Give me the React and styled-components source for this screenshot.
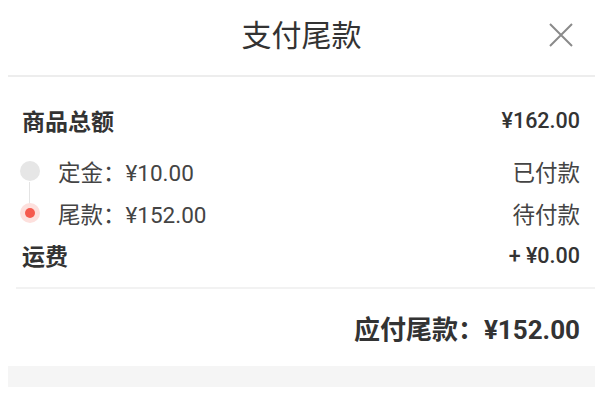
import styled, { createGlobalStyle } from "styled-components";

const GlobalStyle = createGlobalStyle`
  html, body {
    margin: 0;
    padding: 0;
    background: #fff;
  }
  body {
    font-family: Roboto, "Noto Sans CJK SC", sans-serif;
    color: #333;
  }
`;

const Sheet = styled.div`
  width: 587px;
  margin-left: 8px;
`;

const Header = styled.div`
  height: 75px;
  display: grid;
  grid-template-columns: 1fr auto 1fr;
  align-items: center;
  border-bottom: 2px solid #ededed;
`;

const Title = styled.h1`
  grid-column: 2;
  margin: 0;
  font-size: 30px;
  font-weight: 400;
  color: #333;
  line-height: 1;
  padding-bottom: 3px;
`;

const Close = styled.button`
  grid-column: 3;
  justify-self: end;
  margin-right: 22px;
  width: 24px;
  height: 24px;
  padding: 0;
  border: none;
  background: none;
  display: flex;
  align-items: center;
  justify-content: center;
  cursor: pointer;
  margin-bottom: 5px;
`;

const Body = styled.div`
  padding: 22px 15px 0 14px;
`;

const Row = styled.div`
  height: 42px;
  display: flex;
  align-items: center;
  justify-content: space-between;
  margin-top: ${(p) => p.$gap || 0}px;
`;

const Label = styled.span`
  font-size: 23px;
  font-weight: 700;
  color: #333;
`;

const Amount = styled.span`
  font-size: 21.5px;
  font-weight: 500;
  color: #333;
`;

const Status = styled.span`
  font-size: 22.5px;
  color: #444;
`;

const Step = styled.div`
  display: flex;
  align-items: center;
  gap: 18px;
  margin-left: -2px;
  font-size: 22.5px;
  color: #444;
`;

const Dot = styled.span`
  position: relative;
  width: 20px;
  height: 20px;
  border-radius: 50%;
  flex-shrink: 0;
  background: ${(p) => (p.$active ? "#fde0dd" : "#e6e6e6")};
  display: flex;
  align-items: center;
  justify-content: center;

  &::before {
    content: "";
    width: 10px;
    height: 10px;
    border-radius: 50%;
    background: ${(p) => (p.$active ? "#f55a4e" : "transparent")};
  }

  &::after {
    content: ${(p) => (p.$line ? '""' : "none")};
    position: absolute;
    left: 9px;
    top: 21px;
    width: 1px;
    height: 22px;
    background: #e4e4e4;
  }
`;

const Divider = styled.div`
  margin: 11px 0 0 8px;
  height: 2px;
  background: #f2f2f2;
`;

const TotalRow = styled.div`
  height: 77px;
  display: flex;
  align-items: center;
  justify-content: flex-end;
  padding-right: 15px;
`;

const Total = styled.span`
  font-size: 26px;
  font-weight: 700;
  color: #333;
`;

const Band = styled.div`
  height: 21px;
  background: #f5f5f5;
`;

const steps = [
  { label: "定金：¥10.00", status: "已付款", active: false },
  { label: "尾款：¥152.00", status: "待付款", active: true },
];

export default function App() {
  return (
    <>
      <GlobalStyle />
      <Sheet>
        <Header>
          <Title>支付尾款</Title>
          <Close aria-label="关闭">
            <svg width="24" height="24" viewBox="0 0 24 24">
              <path d="M1 1 L23 23 M23 1 L1 23" stroke="#8a8a8a" strokeWidth="2" fill="none" />
            </svg>
          </Close>
        </Header>
        <Body>
          <Row>
            <Label>商品总额</Label>
            <Amount>¥162.00</Amount>
          </Row>
          {steps.map((s, i) => (
            <Row key={s.label} $gap={i === 0 ? 9 : 0}>
              <Step>
                <Dot $active={s.active} $line={i === 0} />
                {s.label}
              </Step>
              <Status>{s.status}</Status>
            </Row>
          ))}
          <Row>
            <Label>运费</Label>
            <Amount>+ ¥0.00</Amount>
          </Row>
        </Body>
        <Divider />
        <TotalRow>
          <Total>应付尾款：¥152.00</Total>
        </TotalRow>
        <Band />
      </Sheet>
    </>
  );
}
